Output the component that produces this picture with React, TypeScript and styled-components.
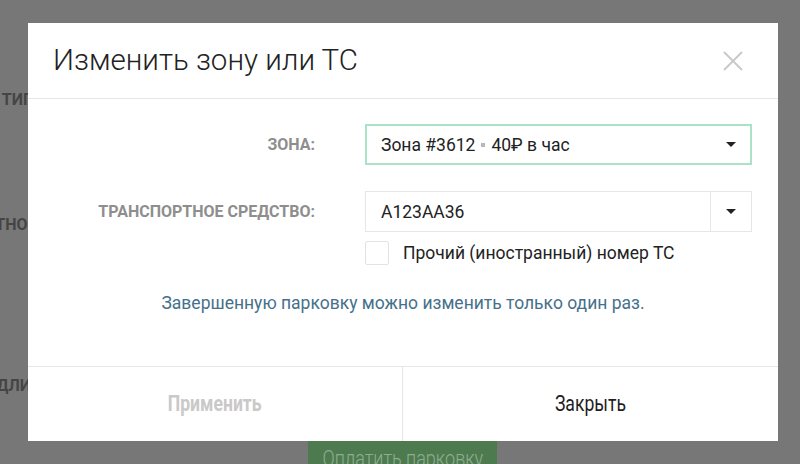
import React from 'react';
import styled, { createGlobalStyle } from 'styled-components';

const GlobalStyle = createGlobalStyle`
  html, body {
    margin: 0;
    padding: 0;
    background: #777777;
    font-family: Roboto, "Noto Sans", Arial, sans-serif;
  }
`;

/* page behind the dialog (already dimmed by the overlay) */
const Page = styled.div`
  position: relative;
  width: 800px;
  height: 464px;
  overflow: hidden;
  background: #777777;
`;

const PageForm = styled.div`
  display: flex;
  flex-direction: column;
  padding-top: 90px;
`;

const PageRow = styled.div<{ gap: number }>`
  display: flex;
  height: 20px;
  margin-bottom: ${(p) => p.gap}px;
`;

const PageLabel = styled.div`
  width: 128px;
  display: flex;
  justify-content: flex-end;
  white-space: nowrap;
  font-size: 16px;
  font-weight: 700;
  color: #454545;
  line-height: 20px;
`;

const PayButton = styled.div`
  align-self: flex-start;
  margin-left: 308px;
  width: 189px;
  height: 34px;
  display: flex;
  align-items: center;
  justify-content: center;
  background: #4e7a50;
  color: #8ead8f;
  font-size: 22px;
  font-weight: 300;
  span {
    display: inline-block;
    transform: scaleX(0.82);
    white-space: nowrap;
  }
`;

const Overlay = styled.div`
  position: absolute;
  inset: 0;
  display: flex;
  align-items: flex-start;
  padding: 23px 0 0 28px;
`;

const Dialog = styled.div`
  width: 750px;
  height: 418px;
  background: #ffffff;
  display: flex;
  flex-direction: column;
`;

const Header = styled.div`
  height: 75px;
  display: flex;
  align-items: center;
  justify-content: space-between;
  padding: 0 34px 0 25px;
  border-bottom: 1px solid #e6e6e6;
`;

const Title = styled.h2`
  margin: 0;
  font-size: 29.5px;
  font-weight: 300;
  color: #222222;
  padding-bottom: 1px;
`;

const CloseButton = styled.button`
  width: 22px;
  height: 22px;
  padding: 0;
  border: none;
  background: none;
  cursor: pointer;
  display: flex;
`;

const Body = styled.div`
  flex: 1;
  display: flex;
  flex-direction: column;
  padding: 25px 26px 0 0;
`;

const FormRow = styled.div<{ gap?: number }>`
  display: grid;
  grid-template-columns: 287px 387px;
  column-gap: 50px;
  align-items: center;
  margin-bottom: ${(p) => p.gap || 0}px;
`;

const FieldLabel = styled.label`
  text-align: right;
  font-size: 16px;
  font-weight: 700;
  color: #8e8e8e;
  text-transform: uppercase;
  white-space: nowrap;
`;

const Caret = styled.span`
  width: 0;
  height: 0;
  border-left: 5px solid transparent;
  border-right: 5px solid transparent;
  border-top: 5px solid #222222;
`;

const Select = styled.div<{ active?: boolean }>`
  height: 41px;
  box-sizing: border-box;
  display: flex;
  align-items: center;
  justify-content: space-between;
  padding: 0 14px;
  border: 2px solid ${(p) => (p.active ? '#a9e2c4' : '#e6e6e6')};
  font-size: 17.5px;
  color: #222222;
`;

const Dot = styled.span`
  display: inline-block;
  width: 4px;
  height: 4px;
  background: #b8b8b8;
  margin: 0 6px;
  vertical-align: 4px;
`;

const InputGroup = styled.div`
  height: 41px;
  display: flex;
`;

const TextInput = styled.div`
  flex: 1;
  box-sizing: border-box;
  display: flex;
  align-items: center;
  padding: 0 15px;
  border: 1px solid #e6e6e6;
  font-size: 17.5px;
  color: #222222;
`;

const AddonButton = styled.div`
  width: 41px;
  box-sizing: border-box;
  display: flex;
  align-items: center;
  justify-content: center;
  border: 1px solid #e6e6e6;
  border-left: none;
`;

const CheckRow = styled.div`
  display: flex;
  align-items: center;
  gap: 14px;
  font-size: 17.5px;
  color: #222222;
`;

const CheckBox = styled.span`
  width: 24px;
  height: 24px;
  box-sizing: border-box;
  border: 1px solid #e3e3e3;
  border-radius: 2px;
`;

const Notice = styled.p`
  margin: 28px 0 0 26px;
  text-align: center;
  font-size: 17.5px;
  color: #46708a;
`;

const Footer = styled.div`
  height: 74px;
  display: grid;
  grid-template-columns: 374px 1fr;
  border-top: 1px solid #e6e6e6;
`;

const FooterButton = styled.button<{ disabled?: boolean }>`
  border: none;
  background: #ffffff;
  padding: 0 0 2px;
  font-family: Roboto, Arial, sans-serif;
  font-size: 22px;
  font-weight: ${(p) => (p.disabled ? 700 : 400)};
  color: ${(p) => (p.disabled ? '#c9c9c9' : '#1e1e1e')};
  cursor: ${(p) => (p.disabled ? 'default' : 'pointer')};
  & + & {
    border-left: 1px solid #e6e6e6;
  }
  span {
    display: inline-block;
    transform: scaleX(0.8);
  }
`;

const App: React.FC = () => (
  <>
    <GlobalStyle />
    <Page>
      <PageForm>
        <PageRow gap={105}>
          <PageLabel>ТИП ПАРКОВКИ:</PageLabel>
        </PageRow>
        <PageRow gap={141}>
          <PageLabel>ТРАНСПОРТНОЕ СРЕДСТВО:</PageLabel>
        </PageRow>
        <PageRow gap={45}>
          <PageLabel>ДЛИТЕЛЬНОСТЬ:</PageLabel>
        </PageRow>
        <PayButton>
          <span>Оплатить парковку</span>
        </PayButton>
      </PageForm>

      <Overlay>
        <Dialog>
          <Header>
            <Title>Изменить зону или ТС</Title>
            <CloseButton aria-label="Закрыть">
              <svg width="22" height="22" viewBox="0 0 22 22">
                <path d="M2 2 L20 20 M20 2 L2 20" stroke="#c8c8c8" strokeWidth="1.8" fill="none" />
              </svg>
            </CloseButton>
          </Header>

          <Body>
            <FormRow gap={26}>
              <FieldLabel>Зона:</FieldLabel>
              <Select active>
                <span>
                  Зона #3612<Dot />40₽ в час
                </span>
                <Caret />
              </Select>
            </FormRow>

            <FormRow gap={9}>
              <FieldLabel>Транспортное средство:</FieldLabel>
              <InputGroup>
                <TextInput>А123АА36</TextInput>
                <AddonButton>
                  <Caret />
                </AddonButton>
              </InputGroup>
            </FormRow>

            <FormRow>
              <span />
              <CheckRow>
                <CheckBox />
                Прочий (иностранный) номер ТС
              </CheckRow>
            </FormRow>

            <Notice>Завершенную парковку можно изменить только один раз.</Notice>
          </Body>

          <Footer>
            <FooterButton disabled>
              <span>Применить</span>
            </FooterButton>
            <FooterButton>
              <span>Закрыть</span>
            </FooterButton>
          </Footer>
        </Dialog>
      </Overlay>
    </Page>
  </>
);

export default App;
